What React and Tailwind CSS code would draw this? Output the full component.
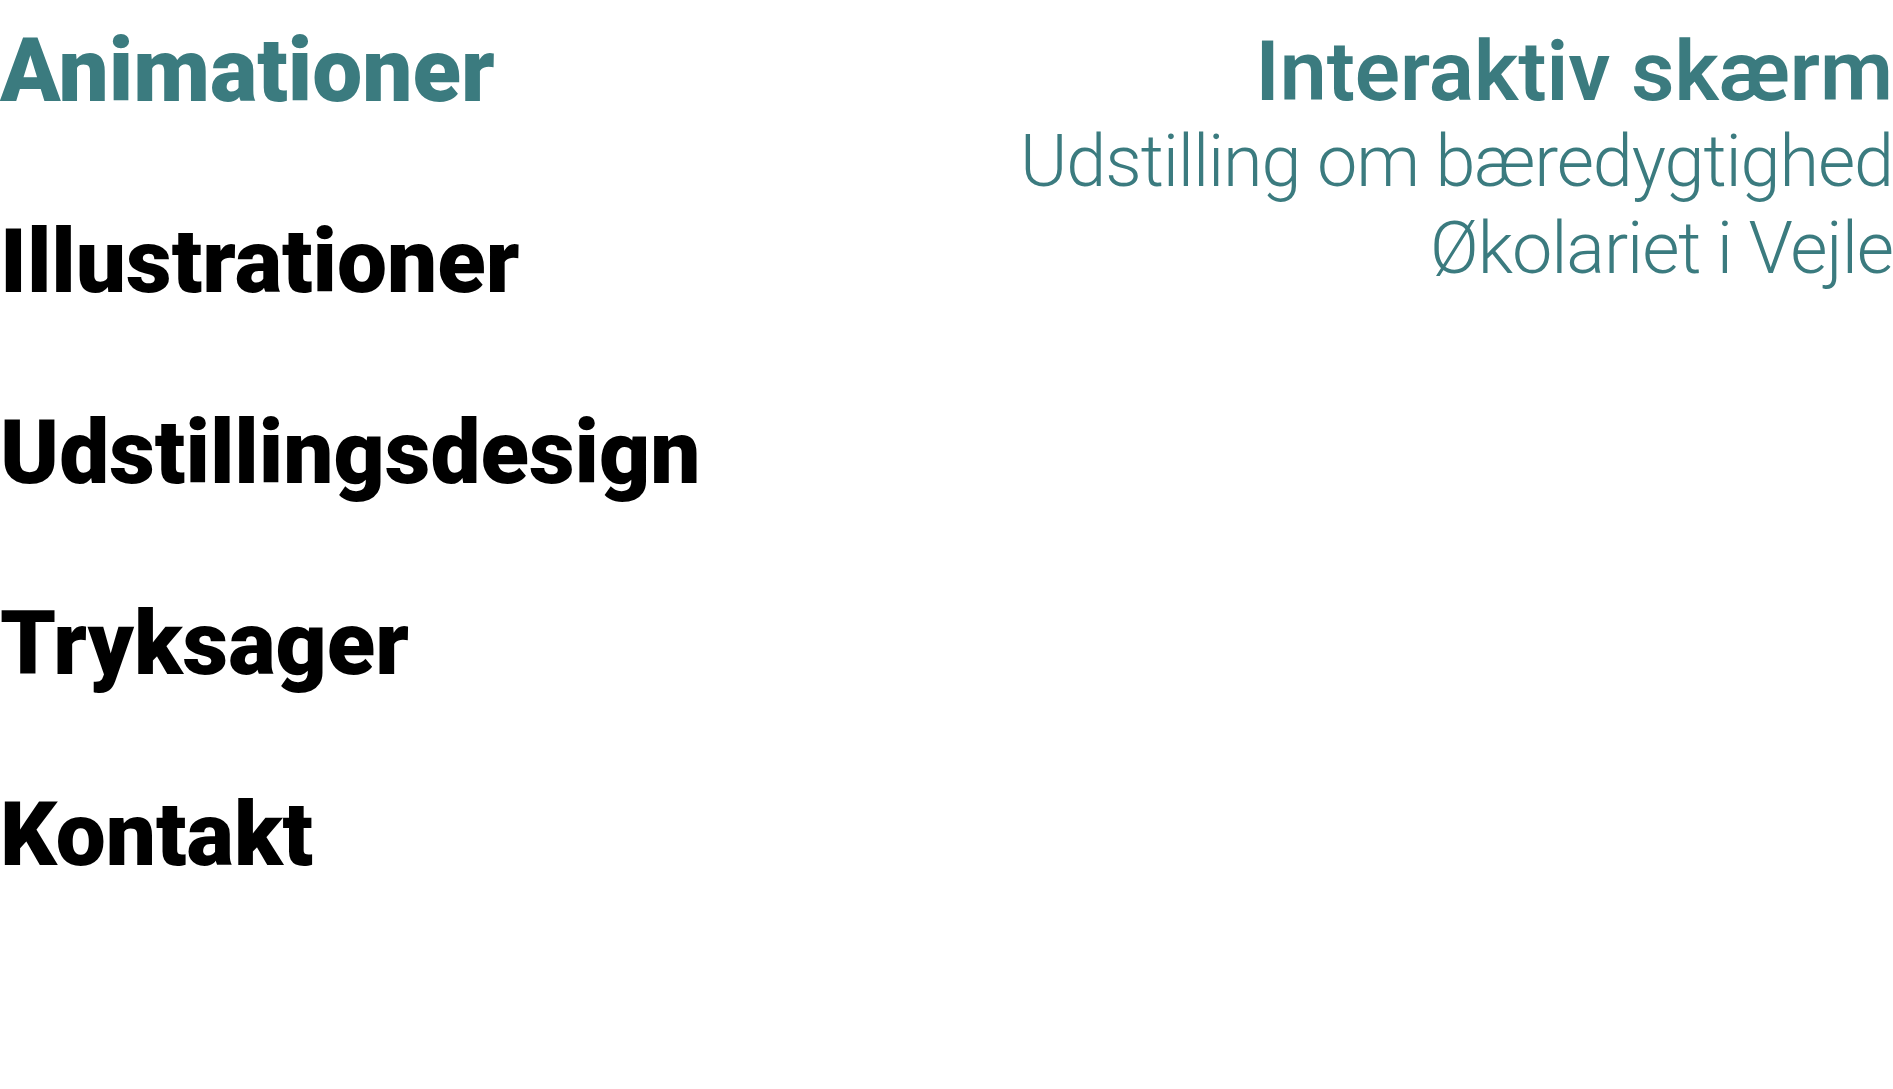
import React from "react";

const menu = [
  { label: "Animationer", active: true },
  { label: "Illustrationer" },
  { label: "Udstillingsdesign" },
  { label: "Tryksager" },
  { label: "Kontakt" },
];

export default function App() {
  return (
    <div className="min-h-screen bg-white font-['Roboto','Liberation_Sans',sans-serif]">
      <div className="flex justify-between">
        <nav>
          <ul className="flex flex-col gap-[102px] pt-[26px]">
            {menu.map((item) => (
              <li key={item.label}>
                <a
                  href="#"
                  className={
                    item.active
                      ? "block text-[89px] font-black leading-none text-[#3b7b7f]"
                      : "block text-[89px] font-black leading-none text-black"
                  }
                >
                  {item.label}
                </a>
              </li>
            ))}
          </ul>
        </nav>

        <div className="pt-[28px] text-right text-[#3b7b7f]">
          <h1 className="text-[84px] font-semibold leading-[87px]">
            Interaktiv skærm
          </h1>
          <p className="mt-[3px] text-[72px] font-light leading-[87px] tracking-[-0.015em]">
            Udstilling om bæredygtighed
            <br />
            Økolariet i Vejle
          </p>
        </div>
      </div>
    </div>
  );
}
